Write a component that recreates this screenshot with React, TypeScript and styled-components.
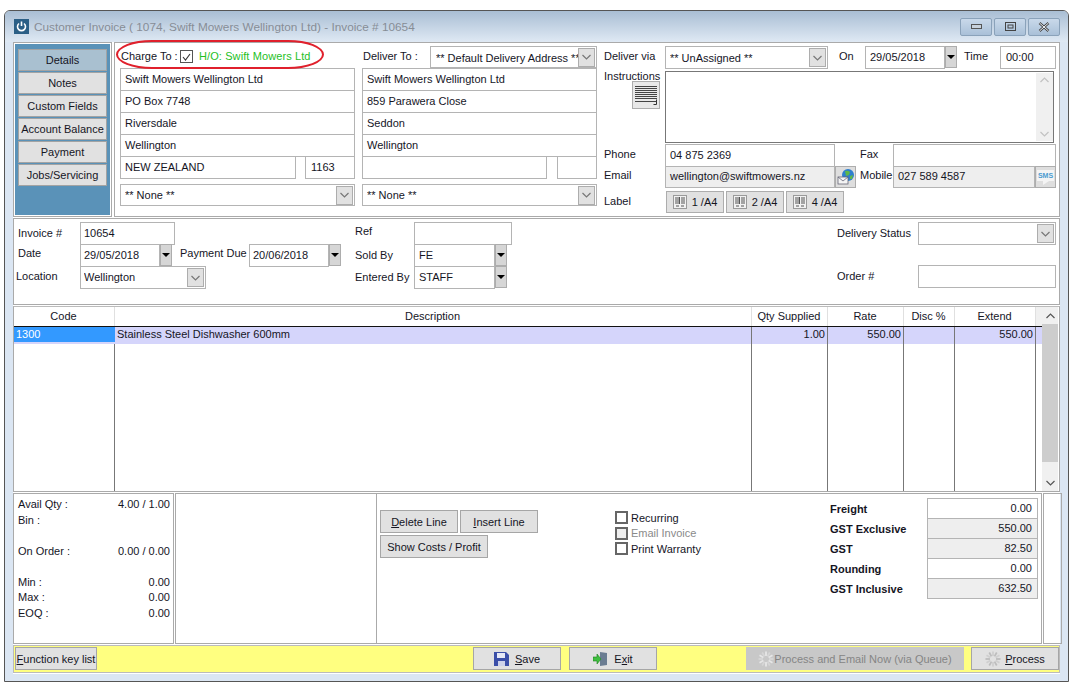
import React from "react";
import styled, { createGlobalStyle } from "styled-components";

const GlobalStyle = createGlobalStyle`
  html, body { margin: 0; padding: 0; background: #fff; }
  body {
    font-family: "Liberation Sans", Arial, sans-serif;
    font-size: 11px;
    color: #15151f;
  }
`;

const Page = styled.div`
  box-sizing: border-box;
  width: 1079px;
  height: 688px;
  padding: 10px 10px 6px 4px;
`;

const Window = styled.div`
  box-sizing: border-box;
  height: 672px;
  border: 1px solid #555;
  border-radius: 6px 6px 0 0;
  background: #dbe6f3;
  padding: 0 8px 8px 8px;
`;

const TitleBar = styled.div`
  display: flex;
  align-items: center;
  height: 31px;
  margin: 0 -8px;
  padding: 0 8px 0 9px;
  background: linear-gradient(#a9bed4, #dfe9f4);
  border-radius: 5px 5px 0 0;
`;

const AppIcon = styled.div`
  display: flex;
  align-items: center;
  justify-content: center;
  width: 15px;
  height: 15px;
  margin-right: 5px;
  background: #2b5f86;
`;

const TitleText = styled.div`
  flex: 1;
  font-size: 11.8px;
  color: #878d96;
`;

const WinButton = styled.div`
  display: flex;
  align-items: center;
  justify-content: center;
  box-sizing: border-box;
  width: 32px;
  height: 18px;
  margin-left: 2px;
  border: 1px solid #8aa2ba;
  border-radius: 2px;
  background: linear-gradient(#c9d9ea, #a9c0d8);
`;

const Content = styled.div`
  display: flex;
  flex-direction: column;
  height: 632px;
  background: #fff;
`;

const TopSection = styled.div`
  display: flex;
  gap: 2px;
  height: 175px;
  flex: none;
`;

const Sidebar = styled.div`
  box-sizing: border-box;
  width: 99px;
  flex: none;
  border: 1px solid #aaa;
  padding: 1px;
  background: #fff;
`;

const SidebarInner = styled.div`
  display: flex;
  flex-direction: column;
  gap: 1px;
  box-sizing: border-box;
  height: 100%;
  padding: 5px 3px;
  background: #5a92b8;
`;

const SideButton = styled.div<{ $active?: boolean }>`
  box-sizing: border-box;
  height: 22px;
  line-height: 20px;
  text-align: center;
  white-space: nowrap;
  border: 1px solid #a3a3a3;
  background: ${(p) => (p.$active ? "#a9c0d0" : "#e1e1e1")};
`;

const MainPanel = styled.div`
  display: flex;
  flex: 1;
  border: 1px solid #aaa;
  padding-left: 5px;
`;

const AddressColumn = styled.div<{ $gap?: number }>`
  display: flex;
  flex-direction: column;
  width: 235px;
  flex: none;
  margin-left: ${(p) => p.$gap ?? 0}px;
`;

const ColumnHeader = styled.div`
  position: relative;
  display: flex;
  height: 25px;
  flex: none;
`;

const RedRing = styled.div`
  position: absolute;
  left: -4px;
  top: -3px;
  box-sizing: border-box;
  width: 208px;
  height: 29px;
  border: 2px solid #e0202c;
  border-radius: 36px / 14.5px;
`;

const Label = styled.div<{ $w?: number; $dy?: number; $pl?: number }>`
  flex: none;
  box-sizing: border-box;
  ${(p) => (p.$w ? `width: ${p.$w}px;` : "")}
  margin-top: ${(p) => p.$dy ?? 0}px;
  padding-left: ${(p) => p.$pl ?? 0}px;
  line-height: 22px;
  white-space: nowrap;
`;

const GreenName = styled.div`
  line-height: 22px;
  margin-top: 2px;
  margin-left: 6px;
  letter-spacing: 0.1px;
  color: #1fbf1f;
`;

const TickBox = styled.div`
  display: flex;
  align-items: center;
  justify-content: center;
  box-sizing: border-box;
  width: 13px;
  height: 13px;
  margin: 7px 0 0 0;
  border: 1px solid #555;
`;

const Field = styled.div<{ $w?: number; $h?: number; $muted?: boolean; $right?: boolean; $pad?: number }>`
  display: flex;
  align-items: center;
  justify-content: ${(p) => (p.$right ? "flex-end" : "flex-start")};
  flex: none;
  box-sizing: border-box;
  ${(p) => (p.$w ? `width: ${p.$w}px;` : "")}
  height: ${(p) => p.$h ?? 23}px;
  padding: 0 ${(p) => p.$pad ?? 4}px 2px;
  border: 1px solid #b4b4b4;
  background: ${(p) => (p.$muted ? "#eeeeee" : "#fff")};
  white-space: nowrap;
  overflow: hidden;
`;

const StackField = styled(Field)`
  margin-top: -1px;
  &:first-child { margin-top: 0; }
`;

const AddressStack = styled.div`
  display: flex;
  flex-direction: column;
`;

const CityRow = styled.div`
  display: flex;
  justify-content: space-between;
  margin-top: -1px;
`;

const ComboBox = styled(Field)<{ $top?: number }>`
  justify-content: space-between;
  margin-top: ${(p) => p.$top ?? 0}px;
  padding: 0 1px 0 4px;
`;

const ComboText = styled.span<{ $dy?: number; $dx?: number }>`
  flex: 1;
  overflow: hidden;
  margin-top: ${(p) => p.$dy ?? 0}px;
  margin-left: ${(p) => p.$dx ?? 0}px;
`;

const ComboArrow = styled.div`
  display: flex;
  align-items: center;
  justify-content: center;
  flex: none;
  box-sizing: border-box;
  width: 17px;
  height: 19px;
  border: 1px solid #adadad;
  background: #e1e1e1;
`;

const DateArrow = styled.div`
  display: flex;
  align-items: center;
  justify-content: center;
  flex: none;
  box-sizing: border-box;
  width: 12px;
  height: 22px;
  border: 1px solid #adadad;
  background: #d6d6d6;
  &::after {
    content: "";
    border-left: 4px solid transparent;
    border-right: 4px solid transparent;
    border-top: 4px solid #000;
  }
`;

const RightColumn = styled.div`
  display: flex;
  flex-direction: column;
  margin-left: 7px;
  width: 452px;
  flex: none;
`;

const FormRow = styled.div<{ $top?: number; $h?: number }>`
  display: flex;
  align-items: flex-start;
  flex: none;
  height: ${(p) => p.$h ?? 22}px;
  margin-top: ${(p) => p.$top ?? 0}px;
`;

const NotesColumn = styled.div`
  display: flex;
  flex-direction: column;
  width: 61px;
  flex: none;
`;

const NotesButton = styled.div`
  display: flex;
  align-items: center;
  justify-content: center;
  box-sizing: border-box;
  width: 28px;
  height: 28px;
  margin: -6px 0 0 28px;
  border: 1px solid #adadad;
  background: #e8e8e8;
`;

const NotesBox = styled.div`
  display: flex;
  justify-content: flex-end;
  box-sizing: border-box;
  width: 389px;
  height: 72px;
  border: 1px solid #777;
  background: #fff;
  padding: 1px 0 1px;
`;

const Scroller = styled.div`
  display: flex;
  flex-direction: column;
  justify-content: space-between;
  align-items: center;
  width: 17px;
  padding: 4px 0;
  box-sizing: border-box;
  background: #f0f0f0;
`;

const IconButton = styled.div<{ $h?: number }>`
  display: flex;
  align-items: center;
  justify-content: center;
  flex: none;
  box-sizing: border-box;
  width: 21px;
  height: ${(p) => p.$h ?? 22}px;
  border: 1px solid #adadad;
  background: #dedede;
`;

const SmsGlyph = styled.div`
  position: relative;
  width: 17px;
  margin-bottom: 3px;
  font-size: 7px;
  line-height: 11px;
  font-weight: 700;
  text-align: center;
  color: #4a9bd0;
  background: #f4f4f4;
  &::after {
    content: "";
    position: absolute;
    left: 6px;
    top: 11px;
    border-left: 6px solid #f4f4f4;
    border-bottom: 4px solid transparent;
  }
`;

const LabelButton = styled.div`
  display: flex;
  align-items: center;
  justify-content: center;
  gap: 5px;
  flex: none;
  box-sizing: border-box;
  width: 58px;
  height: 22px;
  margin-right: 2px;
  border: 1px solid #adadad;
  background: #e1e1e1;
`;

const MidSection = styled.div`
  display: flex;
  box-sizing: border-box;
  height: 87px;
  flex: none;
  margin-top: 1px;
  padding-top: 3px;
  border: 1px solid #aaa;
`;

const MidColumn = styled.div<{ $w?: number; $end?: boolean }>`
  display: flex;
  flex-direction: column;
  flex: none;
  ${(p) => (p.$w ? `width: ${p.$w}px;` : "")}
  ${(p) => (p.$end ? "margin-left: auto; margin-right: 3px;" : "")}
`;

const GridPanel = styled.div`
  display: flex;
  box-sizing: border-box;
  height: 186px;
  flex: none;
  margin-top: 1px;
  border: 1px solid #aaa;
  border-top-color: #bbb;
`;

const GridTable = styled.div`
  display: flex;
  flex-direction: column;
  width: 1028px;
  flex: none;
`;

const columns = "101px 637px 76px 76px 51px 81px 6px";

const HeaderRow = styled.div`
  display: grid;
  grid-template-columns: ${columns};
  height: 19px;
  flex: none;
  border-bottom: 1px solid #111;
`;

const HeaderCell = styled.div`
  box-sizing: border-box;
  padding-right: 1px;
  line-height: 18px;
  text-align: center;
  border-right: 1px solid #e0e0e0;
  &:last-child { border-right: 0; background: #f0f0f0; }
`;

const DataRow = styled.div`
  display: grid;
  grid-template-columns: ${columns};
  height: 17px;
  flex: none;
  background: #d5d5fb;
`;

const FillRow = styled.div`
  display: grid;
  grid-template-columns: ${columns};
  flex: 1;
`;

const Cell = styled.div<{ $right?: boolean; $selected?: boolean }>`
  box-sizing: border-box;
  line-height: 15px;
  padding: 0 2px 0 2px;
  text-align: ${(p) => (p.$right ? "right" : "left")};
  white-space: nowrap;
  border-right: 1px solid #777;
  ${(p) => (p.$selected ? "background: #3399ff; color: #fff; height: 15px; border-right-color: transparent;" : "")}
  &:last-child { border-right: 0; }
`;

const GridScroll = styled.div`
  display: flex;
  flex-direction: column;
  width: 16px;
  flex: none;
  background: #f0f0f0;
`;

const ScrollEnd = styled.div`
  display: flex;
  align-items: center;
  justify-content: center;
  height: 17px;
  flex: none;
`;

const ScrollThumb = styled.div`
  height: 138px;
  flex: none;
  background: #cdcdcd;
`;

const ScrollTrack = styled.div`
  flex: 1;
`;

const BottomSection = styled.div`
  display: flex;
  gap: 1px;
  height: 151px;
  flex: none;
  margin-top: 1px;
`;

const StockPanel = styled.div`
  box-sizing: border-box;
  width: 161px;
  flex: none;
  padding: 2px 3px 0 4px;
  border: 1px solid #aaa;
`;

const StockRow = styled.div<{ $h?: number }>`
  display: flex;
  justify-content: space-between;
  height: ${(p) => p.$h ?? 16}px;
  line-height: 16px;
`;

const EmptyPanel = styled.div`
  box-sizing: border-box;
  width: 201px;
  flex: none;
  border: 1px solid #aaa;
  border-right: 0;
`;

const ActionPanel = styled.div`
  display: flex;
  flex: 1;
  box-sizing: border-box;
  margin-left: -1px;
  padding: 16px 3px 0 3px;
  border: 1px solid #aaa;
`;

const SpacerPanel = styled.div`
  box-sizing: border-box;
  width: 19px;
  flex: none;
  border: 1px solid #aaa;
`;

const LineButtons = styled.div`
  display: flex;
  flex-direction: column;
  gap: 2px;
  width: 235px;
  flex: none;
`;

const ButtonRow = styled.div`
  display: flex;
  gap: 2px;
`;

const FlatButton = styled.div<{ $w: number; $disabled?: boolean; $ml?: number; $gap?: number }>`
  display: flex;
  align-items: center;
  justify-content: center;
  gap: ${(p) => p.$gap ?? 6}px;
  flex: none;
  box-sizing: border-box;
  width: ${(p) => p.$w}px;
  height: 23px;
  margin-left: ${(p) => p.$ml ?? 0}px;
  border: 1px solid ${(p) => (p.$disabled ? "#c8c8c8" : "#a6a6a6")};
  background: ${(p) => (p.$disabled ? "#c8c8c8" : "#e1e1e1")};
  color: ${(p) => (p.$disabled ? "#858585" : "inherit")};
  white-space: nowrap;
`;

const Options = styled.div`
  display: flex;
  flex-direction: column;
  width: 215px;
  flex: none;
`;

const OptionRow = styled.div<{ $muted?: boolean }>`
  display: flex;
  align-items: center;
  gap: 3px;
  height: 15.5px;
  color: ${(p) => (p.$muted ? "#8a8a8a" : "inherit")};
`;

const CheckSquare = styled.div<{ $muted?: boolean }>`
  box-sizing: border-box;
  width: 13px;
  height: 13px;
  border: 2px solid #666;
  background: ${(p) => (p.$muted ? "#eee" : "#fff")};
`;

const Totals = styled.div`
  display: flex;
  margin-top: -12px;
`;

const TotalLabels = styled.div`
  display: flex;
  flex-direction: column;
  width: 97px;
  flex: none;
  padding-top: 1px;
  font-weight: 700;
`;

const TotalLabel = styled.div`
  height: 20px;
  line-height: 20px;
`;

const TotalValues = styled.div`
  display: flex;
  flex-direction: column;
  width: 111px;
  height: 101px;
  flex: none;
`;

const Footer = styled.div`
  display: flex;
  align-items: flex-start;
  box-sizing: border-box;
  height: 28px;
  flex: none;
  margin-top: 1px;
  padding: 1px;
  border: 1px solid #bbb;
  background: #ffff80;
`;

const Chevron = ({ color = "#777", up = false, size = 9 }: { color?: string; up?: boolean; size?: number }) => (
  <svg width={size} height={6} viewBox="0 0 9 6">
    <path d={up ? "M0.5 5 L4.5 1 L8.5 5" : "M0.5 1 L4.5 5 L8.5 1"} fill="none" stroke={color} strokeWidth="1.2" />
  </svg>
);

const Barcode = () => (
  <svg width="14" height="14" viewBox="0 0 14 14">
    <rect x="0.5" y="0.5" width="13" height="13" fill="#f2f2f2" stroke="#9a9a9a" />
    <path d="M3 2v7M5 2v7M6.5 2v7M9 2v7M11 2v7M3 11h3M8 11h3" stroke="#555" strokeWidth="1" fill="none" />
  </svg>
);

// soft starburst used on the two process buttons
const Gear = ({ light, dark }: { light: string; dark: string }) => (
  <svg width="16" height="16" viewBox="0 0 16 16">
    {[0, 30, 60, 90, 120, 150, 180, 210, 240, 270, 300, 330].map((a, i) => (
      <rect key={a} x="7.1" y="0.5" width="1.8" height="4.5" fill={i % 2 ? dark : light} transform={`rotate(${a} 8 8)`} />
    ))}
  </svg>
);

const Barcodes = ["1 /A4", "2 /A4", "4 /A4"];
const sideItems = ["Details", "Notes", "Custom Fields", "Account Balance", "Payment", "Jobs/Servicing"];
const totals = [
  { label: "Freight", value: "0.00", muted: false },
  { label: "GST Exclusive", value: "550.00", muted: true },
  { label: "GST", value: "82.50", muted: true },
  { label: "Rounding", value: "0.00", muted: false },
  { label: "GST Inclusive", value: "632.50", muted: true },
];

const Address = ({ lines, country, postcode, countryW }: { lines: string[]; country: string; postcode: string; countryW: number }) => (
  <>
    <AddressStack>
      {lines.map((l) => (
        <StackField key={l}>{l}</StackField>
      ))}
    </AddressStack>
    <CityRow>
      <Field $w={countryW}>{country}</Field>
      <Field $w={countryW === 176 ? 50 : 40} $pad={5}>{postcode}</Field>
    </CityRow>
    <FormRow $top={5}>
      <ComboBox $w={235} $h={22}>
        <ComboText>** None **</ComboText>
        <ComboArrow><Chevron /></ComboArrow>
      </ComboBox>
    </FormRow>
  </>
);

export default function App() {
  return (
    <Page>
      <GlobalStyle />
      <Window>
        <TitleBar>
          <AppIcon>
            <svg width="11" height="11" viewBox="0 0 11 11">
              <path d="M3 2.5 A4 4 0 1 0 8 2.5" fill="none" stroke="#fff" strokeWidth="1.6" />
              <path d="M5.5 0.5 V5" stroke="#fff" strokeWidth="1.6" />
            </svg>
          </AppIcon>
          <TitleText>Customer Invoice ( 1074, Swift Mowers Wellington Ltd) - Invoice # 10654</TitleText>
          <WinButton>
            <svg width="11" height="5"><rect x="0.5" y="0.5" width="10" height="4" fill="#c8d2dc" stroke="#555" /></svg>
          </WinButton>
          <WinButton>
            <svg width="11" height="9"><rect x="0.5" y="0.5" width="10" height="8" fill="none" stroke="#444" /><rect x="3" y="3" width="5" height="3" fill="none" stroke="#444" /></svg>
          </WinButton>
          <WinButton>
            <svg width="12" height="10" viewBox="0 0 12 10"><path d="M1.5 1 L10.5 9 M10.5 1 L1.5 9" stroke="#444" strokeWidth="2.4" /><path d="M1.5 1 L10.5 9 M10.5 1 L1.5 9" stroke="#eef2f6" strokeWidth="1" /></svg>
          </WinButton>
        </TitleBar>
        <Content>
          <TopSection>
            <Sidebar>
              <SidebarInner>
                {sideItems.map((s, i) => (
                  <SideButton key={s} $active={i === 0}>{s}</SideButton>
                ))}
              </SidebarInner>
            </Sidebar>
            <MainPanel>
              <AddressColumn>
                <ColumnHeader>
                  <RedRing />
                  <Label $w={60} $dy={2} $pl={1}>Charge To :</Label>
                  <TickBox>
                    <svg width="9" height="8" viewBox="0 0 9 8"><path d="M1 4 L3.5 7 L8 1" fill="none" stroke="#333" strokeWidth="1.1" /></svg>
                  </TickBox>
                  <GreenName>H/O: Swift Mowers Ltd</GreenName>
                </ColumnHeader>
                <Address
                  lines={["Swift Mowers Wellington Ltd", "PO Box 7748", "Riversdale", "Wellington"]}
                  country="NEW ZEALAND"
                  postcode="1163"
                  countryW={176}
                />
              </AddressColumn>
              <AddressColumn $gap={7}>
                <ColumnHeader>
                  <Label $w={68} $dy={2} $pl={1}>Deliver To :</Label>
                  <ComboBox $w={167} $h={22} $top={3}>
                    <ComboText $dy={2} $dx={1}>** Default Delivery Address **</ComboText>
                    <ComboArrow><Chevron /></ComboArrow>
                  </ComboBox>
                </ColumnHeader>
                <Address
                  lines={["Swift Mowers Wellington Ltd", "859 Parawera Close", "Seddon", "Wellington"]}
                  country=""
                  postcode=""
                  countryW={185}
                />
              </AddressColumn>
              <RightColumn>
                <FormRow $top={3} $h={23}>
                  <Label $w={61} $dy={-1}>Deliver via</Label>
                  <ComboBox $w={163} $h={23}>
                    <ComboText>** UnAssigned **</ComboText>
                    <ComboArrow><Chevron /></ComboArrow>
                  </ComboBox>
                  <Label $w={37} $pl={11} $dy={-1}>On</Label>
                  <Field $w={80}>29/05/2018</Field>
                  <DateArrow />
                  <Label $w={43} $pl={7} $dy={-1}>Time</Label>
                  <Field $w={56} $pad={5}>00:00</Field>
                </FormRow>
                <FormRow $top={2} $h={72}>
                  <NotesColumn>
                    <Label $dy={-6}>Instructions</Label>
                    <NotesButton>
                      <svg width="24" height="22" viewBox="0 0 24 22">
                        <path d="M1 2.5h22M1 4.5h22M1 6.5h22M1 8.5h22M1 10.5h22M1 12.5h22M1 14.5h22M1 17.5h22" stroke="#444" strokeWidth="1" fill="none" />
                        <path d="M22.5 15.5v5h-3" stroke="#333" strokeWidth="1" fill="none" />
                      </svg>
                    </NotesButton>
                  </NotesColumn>
                  <NotesBox>
                    <Scroller>
                      <Chevron color="#c2c2c2" up />
                      <Chevron color="#c2c2c2" />
                    </Scroller>
                  </NotesBox>
                </FormRow>
                <FormRow $top={1}>
                  <Label $w={61} $dy={-1}>Phone</Label>
                  <Field $w={170}>04 875 2369</Field>
                  <Label $w={58} $pl={25} $dy={-1}>Fax</Label>
                  <Field $w={163} />
                </FormRow>
                <FormRow>
                  <Label $w={61} $dy={-2}>Email</Label>
                  <Field $w={170} $h={22} $muted>wellington@swiftmowers.nz</Field>
                  <IconButton>
                    <svg width="18" height="18" viewBox="0 0 18 18">
                      <circle cx="11" cy="7" r="6" fill="#2e7fcf" />
                      <path d="M8 3 Q11 2 13 4 L12 7 L9 8 Z M13 8 L16 7 L15 11 L13 11 Z" fill="#5fb84a" />
                      <rect x="1" y="9" width="10" height="7" fill="#f4f4f4" stroke="#667" strokeWidth="0.8" />
                      <path d="M1 9 L6 13 L11 9" fill="none" stroke="#667" strokeWidth="0.8" />
                    </svg>
                  </IconButton>
                  <Label $w={37} $pl={4} $dy={-2}>Mobile</Label>
                  <Field $w={142} $h={22} $muted>027 589 4587</Field>
                  <IconButton><SmsGlyph>SMS</SmsGlyph></IconButton>
                </FormRow>
                <FormRow $top={3}>
                  <Label $w={62} $dy={-1}>Label</Label>
                  {Barcodes.map((b) => (
                    <LabelButton key={b}><Barcode />{b}</LabelButton>
                  ))}
                </FormRow>
              </RightColumn>
            </MainPanel>
          </TopSection>

          <MidSection>
            <MidColumn $w={341}>
              <FormRow>
                <Label $w={66} $pl={4}>Invoice #</Label>
                <Field $w={95} $pad={3}>10654</Field>
              </FormRow>
              <FormRow>
                <Label $w={66} $pl={4} $dy={-2}>Date</Label>
                <Field $w={80} $pad={3}>29/05/2018</Field>
                <DateArrow />
                <Label $w={77} $pl={8} $dy={-2}>Payment Due</Label>
                <Field $w={80} $pad={3}>20/06/2018</Field>
                <DateArrow />
              </FormRow>
              <FormRow>
                <Label $w={66} $pl={2} $dy={-1}>Location</Label>
                <ComboBox $w={126}>
                  <ComboText $dy={-2} $dx={-1}>Wellington</ComboText>
                  <ComboArrow><Chevron /></ComboArrow>
                </ComboBox>
              </FormRow>
            </MidColumn>
            <MidColumn $w={152}>
              <FormRow>
                <Label $w={59} $dy={-2}>Ref</Label>
                <Field $w={98} />
              </FormRow>
              <FormRow>
                <Label $w={59}>Sold By</Label>
                <Field $w={81}>FE</Field>
                <DateArrow />
              </FormRow>
              <FormRow>
                <Label $w={59}>Entered By</Label>
                <Field $w={81}>STAFF</Field>
                <DateArrow />
              </FormRow>
            </MidColumn>
            <MidColumn $end>
              <FormRow $h={43}>
                <Label $w={81}>Delivery Status</Label>
                <ComboBox $w={138}>
                  <ComboText />
                  <ComboArrow><Chevron /></ComboArrow>
                </ComboBox>
              </FormRow>
              <FormRow>
                <Label $w={81}>Order #</Label>
                <Field $w={138} />
              </FormRow>
            </MidColumn>
          </MidSection>

          <GridPanel>
            <GridTable>
              <HeaderRow>
                <HeaderCell>Code</HeaderCell>
                <HeaderCell>Description</HeaderCell>
                <HeaderCell>Qty Supplied</HeaderCell>
                <HeaderCell>Rate</HeaderCell>
                <HeaderCell>Disc %</HeaderCell>
                <HeaderCell>Extend</HeaderCell>
                <HeaderCell />
              </HeaderRow>
              <DataRow>
                <Cell $selected>1300</Cell>
                <Cell>Stainless Steel Dishwasher 600mm</Cell>
                <Cell $right>1.00</Cell>
                <Cell $right>550.00</Cell>
                <Cell />
                <Cell $right>550.00</Cell>
                <Cell />
              </DataRow>
              <FillRow>
                <Cell /><Cell /><Cell /><Cell /><Cell /><Cell /><Cell />
              </FillRow>
            </GridTable>
            <GridScroll>
              <ScrollEnd><Chevron color="#555" up /></ScrollEnd>
              <ScrollThumb />
              <ScrollTrack />
              <ScrollEnd><Chevron color="#555" /></ScrollEnd>
            </GridScroll>
          </GridPanel>

          <BottomSection>
            <StockPanel>
              <StockRow><span>Avail Qty :</span><span>4.00 / 1.00</span></StockRow>
              <StockRow $h={31}><span>Bin :</span></StockRow>
              <StockRow $h={31}><span>On Order :</span><span>0.00 / 0.00</span></StockRow>
              <StockRow $h={15}><span>Min :</span><span>0.00</span></StockRow>
              <StockRow><span>Max :</span><span>0.00</span></StockRow>
              <StockRow><span>EOQ :</span><span>0.00</span></StockRow>
            </StockPanel>
            <EmptyPanel />
            <ActionPanel>
              <LineButtons>
                <ButtonRow>
                  <FlatButton $w={78}><span><u>D</u>elete Line</span></FlatButton>
                  <FlatButton $w={78}><span><u>I</u>nsert Line</span></FlatButton>
                </ButtonRow>
                <FlatButton $w={108}>Show Costs / Profit</FlatButton>
              </LineButtons>
              <Options>
                <OptionRow><CheckSquare />Recurring</OptionRow>
                <OptionRow $muted><CheckSquare $muted />Email Invoice</OptionRow>
                <OptionRow><CheckSquare />Print Warranty</OptionRow>
              </Options>
              <Totals>
                <TotalLabels>
                  {totals.map((t) => (
                    <TotalLabel key={t.label}>{t.label}</TotalLabel>
                  ))}
                </TotalLabels>
                <TotalValues>
                  {totals.map((t) => (
                    <StackField key={t.label} $h={21} $pad={5} $right $muted={t.muted}>{t.value}</StackField>
                  ))}
                </TotalValues>
              </Totals>
            </ActionPanel>
            <SpacerPanel />
          </BottomSection>

          <Footer>
            <FlatButton $w={82}><span><u>F</u>unction key list</span></FlatButton>
            <FlatButton $w={88} $ml={376}>
              <svg width="15" height="14" viewBox="0 0 15 14">
                <path d="M0 0 H12 L15 3 V14 H0 Z" fill="#3b4fa8" />
                <rect x="3" y="1" width="8" height="5" fill="#e6e9f6" />
                <rect x="4" y="9" width="7" height="5" fill="#cdd2ea" />
              </svg>
              <span><u>S</u>ave</span>
            </FlatButton>
            <FlatButton $w={88} $ml={8}>
              <svg width="15" height="14" viewBox="0 0 15 14">
                <path d="M7 0 L14 1 V13 L7 14 Z" fill="#6b7d92" />
                <path d="M0 5 H4 V2 L8 7 L4 12 V9 H0 Z" fill="#3fbf3f" stroke="#1f7f1f" strokeWidth="0.6" />
              </svg>
              <span>E<u>x</u>it</span>
            </FlatButton>
            <FlatButton $w={218} $ml={89} $disabled $gap={0}>
              <Gear light="#e6e6e6" dark="#d6d6d6" />
              <span>Process and Email Now (via Queue)</span>
            </FlatButton>
            <FlatButton $w={88} $ml={7} $gap={4}>
              <Gear light="#cfcfcf" dark="#bdbdbd" />
              <span><u>P</u>rocess</span>
            </FlatButton>
          </Footer>
        </Content>
      </Window>
    </Page>
  );
}
